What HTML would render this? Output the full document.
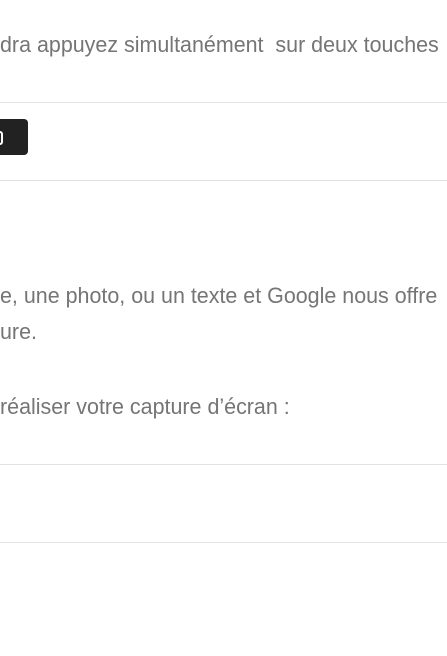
<!DOCTYPE html>
<html><head><meta charset="utf-8"><style>
html,body{margin:0;padding:0;background:#fff;width:447px;height:656px;overflow:hidden;position:relative}
.t{position:absolute;white-space:nowrap;font-family:"Liberation Sans",sans-serif;font-size:22px;color:#757575;transform-origin:0 0;transform:scaleX(0.975);line-height:24px}
.l{position:absolute;left:0;width:447px;height:1px;background:#e2e2e2}
.k{position:absolute;left:-10px;top:119px;width:38px;height:36px;background:#222;border-radius:4px}
.k span{position:absolute;left:8px;top:12px;width:3px;height:10px;border:2px solid #fff;border-left:none;border-radius:0 3px 3px 0}
</style></head><body>
<div class="t" style="left:0;top:33px">dra appuyez simultanément&nbsp; sur deux touches</div>
<div class="l" style="top:102px"></div>
<div class="k"><span></span></div>
<div class="l" style="top:180px"></div>
<div class="t" style="left:0;top:284px">e, une photo, ou un texte et Google nous offre</div>
<div class="t" style="left:0;top:320px">ure.</div>
<div class="t" style="left:0;top:395px">réaliser votre capture d’écran :</div>
<div class="l" style="top:464px"></div>
<div class="l" style="top:542px"></div>
</body></html>
